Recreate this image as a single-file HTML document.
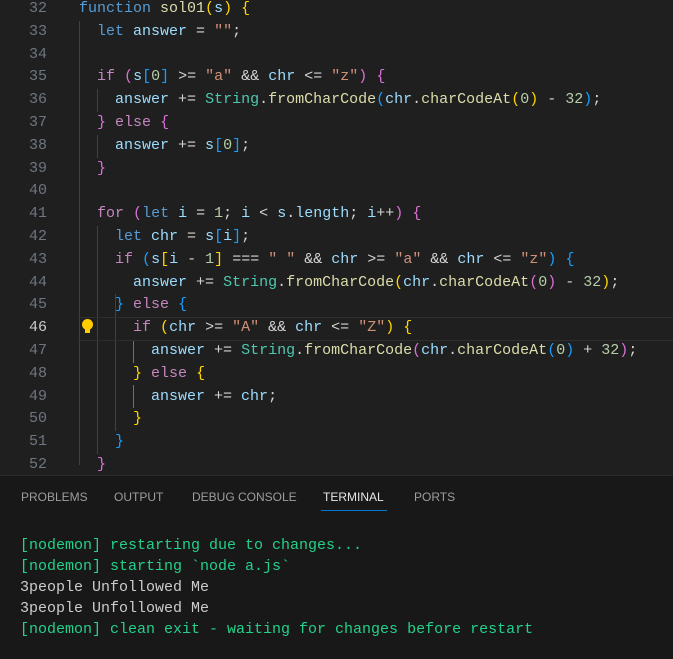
<!DOCTYPE html><html><head><style>
body{margin:0;width:673px;height:658px;background:#1f1f1f;overflow:hidden;font-family:"Liberation Mono",monospace;font-size:15px}
.ed{position:absolute;left:0;top:0;width:673px;height:475px;background:#1f1f1f;overflow:hidden}
.l{position:absolute;left:0;height:22.8px;line-height:22.8px;width:673px;white-space:pre}
.n{position:absolute;right:626px;color:#6e7681;text-align:right}
.c{position:absolute;left:79px;color:#9cdcfe}
.k{color:#569cd6}.p{color:#c586c0}.s{color:#ce9178}.f{color:#dcdcaa}.t{color:#4ec9b0}.o{color:#d4d4d4}.m{color:#b5cea8}
.y{color:#ffd700}.v{color:#da70d6}.b{color:#179fff}
.g{position:absolute;width:1px;background:#404040}
.panel{position:absolute;left:0;top:475px;width:673px;height:183px;background:#181818;border-top:1px solid #2b2b2b}
.tab{position:absolute;top:14px;font-family:"Liberation Sans",sans-serif;font-size:12px;color:#9d9d9d}
.term{position:absolute;left:20px;white-space:pre;line-height:21px;color:#cccccc}
.gr{color:#23d18b}
</style></head><body>
<div class="ed">
<div class="g" style="left:79px;top:21px;height:444px"></div>
<div class="g" style="left:97px;top:89px;height:23px"></div>
<div class="g" style="left:97px;top:135px;height:23px"></div>
<div class="g" style="left:97px;top:226px;height:228px"></div>
<div class="g" style="left:115px;top:294px;height:137px"></div>
<div class="g" style="left:133px;top:340px;height:23px;background:#707070"></div>
<div class="g" style="left:133px;top:385px;height:23px;background:#707070"></div>
<div style="position:absolute;left:78px;top:317px;width:595px;height:22px;border-top:1px solid #2e2e2e;border-bottom:1px solid #2e2e2e"></div>
<div style="position:absolute;left:82px;top:319px;width:11px;height:11px;border-radius:50%;background:#ffcc00"></div>
<div style="position:absolute;left:85px;top:329px;width:5px;height:4px;background:#ffcc00"></div>

<div class="l" style="top:-2px"><span class="n">32</span><span class="c"><span class="k">function</span> <span class="f">sol01</span><span class="y">(</span>s<span class="y">)</span> <span class="y">{</span></span></div>
<div class="l" style="top:20.8px"><span class="n">33</span><span class="c">  <span class="k">let</span> answer <span class="o">=</span> <span class="s">""</span><span class="o">;</span></span></div>
<div class="l" style="top:43.6px"><span class="n">34</span></div>
<div class="l" style="top:66.4px"><span class="n">35</span><span class="c">  <span class="p">if</span> <span class="v">(</span>s<span class="b">[</span><span class="m">0</span><span class="b">]</span> <span class="o">&gt;=</span> <span class="s">"a"</span> <span class="o">&amp;&amp;</span> chr <span class="o">&lt;=</span> <span class="s">"z"</span><span class="v">)</span> <span class="v">{</span></span></div>
<div class="l" style="top:89.2px"><span class="n">36</span><span class="c">    answer <span class="o">+=</span> <span class="t">String</span><span class="o">.</span><span class="f">fromCharCode</span><span class="b">(</span>chr<span class="o">.</span><span class="f">charCodeAt</span><span class="y">(</span><span class="m">0</span><span class="y">)</span> <span class="o">-</span> <span class="m">32</span><span class="b">)</span><span class="o">;</span></span></div>
<div class="l" style="top:112px"><span class="n">37</span><span class="c">  <span class="v">}</span> <span class="p">else</span> <span class="v">{</span></span></div>
<div class="l" style="top:134.8px"><span class="n">38</span><span class="c">    answer <span class="o">+=</span> s<span class="b">[</span><span class="m">0</span><span class="b">]</span><span class="o">;</span></span></div>
<div class="l" style="top:157.6px"><span class="n">39</span><span class="c">  <span class="v">}</span></span></div>
<div class="l" style="top:180.4px"><span class="n">40</span></div>
<div class="l" style="top:203.2px"><span class="n">41</span><span class="c">  <span class="p">for</span> <span class="v">(</span><span class="k">let</span> i <span class="o">=</span> <span class="m">1</span><span class="o">;</span> i <span class="o">&lt;</span> s<span class="o">.</span>length<span class="o">;</span> i<span class="o">++</span><span class="v">)</span> <span class="v">{</span></span></div>
<div class="l" style="top:226px"><span class="n">42</span><span class="c">    <span class="k">let</span> chr <span class="o">=</span> s<span class="b">[</span>i<span class="b">]</span><span class="o">;</span></span></div>
<div class="l" style="top:248.8px"><span class="n">43</span><span class="c">    <span class="p">if</span> <span class="b">(</span>s<span class="y">[</span>i <span class="o">-</span> <span class="m">1</span><span class="y">]</span> <span class="o">===</span> <span class="s">" "</span> <span class="o">&amp;&amp;</span> chr <span class="o">&gt;=</span> <span class="s">"a"</span> <span class="o">&amp;&amp;</span> chr <span class="o">&lt;=</span> <span class="s">"z"</span><span class="b">)</span> <span class="b">{</span></span></div>
<div class="l" style="top:271.6px"><span class="n">44</span><span class="c">      answer <span class="o">+=</span> <span class="t">String</span><span class="o">.</span><span class="f">fromCharCode</span><span class="y">(</span>chr<span class="o">.</span><span class="f">charCodeAt</span><span class="v">(</span><span class="m">0</span><span class="v">)</span> <span class="o">-</span> <span class="m">32</span><span class="y">)</span><span class="o">;</span></span></div>
<div class="l" style="top:294.4px"><span class="n">45</span><span class="c">    <span class="b">}</span> <span class="p">else</span> <span class="b">{</span></span></div>
<div class="l" style="top:317.2px"><span class="n" style="color:#cccccc">46</span><span class="c">      <span class="p">if</span> <span class="y">(</span>chr <span class="o">&gt;=</span> <span class="s">"A"</span> <span class="o">&amp;&amp;</span> chr <span class="o">&lt;=</span> <span class="s">"Z"</span><span class="y">)</span> <span class="y">{</span></span></div>
<div class="l" style="top:340px"><span class="n">47</span><span class="c">        answer <span class="o">+=</span> <span class="t">String</span><span class="o">.</span><span class="f">fromCharCode</span><span class="v">(</span>chr<span class="o">.</span><span class="f">charCodeAt</span><span class="b">(</span><span class="m">0</span><span class="b">)</span> <span class="o">+</span> <span class="m">32</span><span class="v">)</span><span class="o">;</span></span></div>
<div class="l" style="top:362.8px"><span class="n">48</span><span class="c">      <span class="y">}</span> <span class="p">else</span> <span class="y">{</span></span></div>
<div class="l" style="top:385.6px"><span class="n">49</span><span class="c">        answer <span class="o">+=</span> chr<span class="o">;</span></span></div>
<div class="l" style="top:408.4px"><span class="n">50</span><span class="c">      <span class="y">}</span></span></div>
<div class="l" style="top:431.2px"><span class="n">51</span><span class="c">    <span class="b">}</span></span></div>
<div class="l" style="top:454px"><span class="n">52</span><span class="c">  <span class="v">}</span></span></div>
</div>
<div class="panel">
<span class="tab" style="left:21px">PROBLEMS</span>
<span class="tab" style="left:114px">OUTPUT</span>
<span class="tab" style="left:192px">DEBUG CONSOLE</span>
<span class="tab" style="left:323px;color:#e7e7e7">TERMINAL</span>
<div style="position:absolute;left:321px;top:34px;width:66px;height:1px;background:#0078d4"></div>
<span class="tab" style="left:414px">PORTS</span>
<div class="term" style="top:59px"><span class="gr">[nodemon] restarting due to changes...
[nodemon] starting `node a.js`</span>
3people Unfollowed Me
3people Unfollowed Me
<span class="gr">[nodemon] clean exit - waiting for changes before restart</span></div>
</div>
</body></html>
